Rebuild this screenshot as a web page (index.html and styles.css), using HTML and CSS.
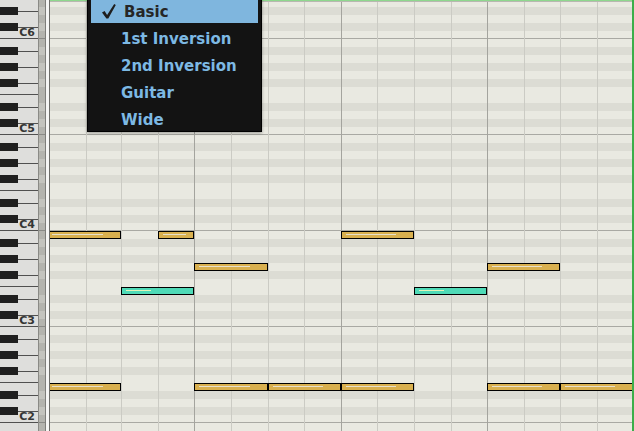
FILE: index.html
```html
<!DOCTYPE html>
<html lang="en">
<head>
  <meta charset="UTF-8" />
  <title>Piano Roll</title>
  <link rel="stylesheet" href="styles.css">
</head>
<body>

  <div class="roll">
    <div class="keys">
      <div class="octave"><span class="label">C6</span></div>
      <div class="octave"><span class="label">C5</span></div>
      <div class="octave"><span class="label">C4</span></div>
      <div class="octave"><span class="label">C3</span></div>
      <div class="octave"><span class="label">C2</span></div>
      <div class="octave"></div>
    </div>

    <div class="strip"></div>

    <div class="grid">
      <div class="beats">
        <div class="beat first" style="width: 36px"></div>
        <div class="beat" style="width: 35px"></div>
        <div class="beat" style="width: 37px"></div>
        <div class="beat" style="width: 36px"></div>
        <div class="beat bar" style="width: 37px"></div>
        <div class="beat" style="width: 37px"></div>
        <div class="beat" style="width: 36px"></div>
        <div class="beat" style="width: 37px"></div>
        <div class="beat bar" style="width: 36px"></div>
        <div class="beat" style="width: 37px"></div>
        <div class="beat" style="width: 37px"></div>
        <div class="beat" style="width: 36px"></div>
        <div class="beat bar" style="width: 37px"></div>
        <div class="beat" style="width: 36px"></div>
        <div class="beat" style="width: 37px"></div>
        <div class="beat" style="width: 36px"></div>
      </div>

      <!-- B3 -->
      <div class="note" style="left: -3px; top: 231px; width: 74px"></div>
      <div class="note" style="left: 108px; top: 231px; width: 36px"></div>
      <div class="note" style="left: 291px; top: 231px; width: 73px"></div>
      <!-- G3 -->
      <div class="note" style="left: 144px; top: 263px; width: 74px"></div>
      <div class="note" style="left: 437px; top: 263px; width: 73px"></div>
      <!-- E3 -->
      <div class="note teal" style="left: 71px; top: 287px; width: 73px"></div>
      <div class="note teal" style="left: 364px; top: 287px; width: 73px"></div>
      <!-- E2 -->
      <div class="note" style="left: -3px; top: 383px; width: 74px"></div>
      <div class="note" style="left: 144px; top: 383px; width: 74px"></div>
      <div class="note" style="left: 218px; top: 383px; width: 73px"></div>
      <div class="note" style="left: 291px; top: 383px; width: 73px"></div>
      <div class="note" style="left: 437px; top: 383px; width: 73px"></div>
      <div class="note" style="left: 510px; top: 383px; width: 73px"></div>
    </div>

    <ul class="menu">
      <li class="item checked">
        <svg class="check" width="14" height="15" viewBox="0 0 14 15">
          <path d="M0 8.6 L2.6 7 L5.1 11 L12.2 0 L13.8 0.9 L6.3 14.6 L4.4 14.6 Z" fill="#1e1e1e"/>
        </svg>
        Basic
      </li>
      <li class="item">1st Inversion</li>
      <li class="item">2nd Inversion</li>
      <li class="item">Guitar</li>
      <li class="item">Wide</li>
    </ul>
  </div>

</body>
</html>
```

FILE: styles.css
```css
body {
  margin: 0;
  background-color: #e9e9e1;
  overflow: hidden;
}

.roll {
  position: relative;
  display: flex;
  height: 431px;
  overflow: hidden;
}

/* keyboard, one block per octave, top of block = top of the B row */
.keys {
  flex: none;
  width: 38px;
  display: flex;
  flex-direction: column;
  margin-top: -57px;
}

.octave {
  flex: none;
  height: 96px;
  display: flex;
  justify-content: flex-end;
  align-items: flex-end;
  background:
    linear-gradient(to bottom, transparent 8px, #1f1f1f 8px 16px, transparent 16px 24px, #1f1f1f 24px 32px, transparent 32px 40px, #1f1f1f 40px 48px, transparent 48px 64px, #1f1f1f 64px 72px, transparent 72px 80px, #1f1f1f 80px 88px, transparent 88px) 0 0 / 18px 96px no-repeat,
    linear-gradient(to bottom, transparent 12px, #505050 12px 13px, transparent 13px 28px, #505050 28px 29px, transparent 29px 44px, #505050 44px 45px, transparent 45px 68px, #505050 68px 69px, transparent 69px 84px, #505050 84px 85px, transparent 85px) 18px 0 / 20px 96px no-repeat,
    linear-gradient(to bottom, transparent 55px, #505050 55px 56px, transparent 56px 95px, #505050 95px) 0 0 / 100% 96px no-repeat,
    #dededc;
}

.label {
  font-family: "DejaVu Sans", sans-serif;
  font-weight: bold;
  font-size: 11px;
  line-height: 12px;
  color: #353535;
  padding-right: 3px;
}

.strip {
  flex: none;
  width: 12px;
  background:
    linear-gradient(to bottom, transparent 8px, #c4c4be 8px 16px, transparent 16px 24px, #c4c4be 24px 32px, transparent 32px 40px, #c4c4be 40px 48px, transparent 48px 64px, #c4c4be 64px 72px, transparent 72px 80px, #c4c4be 80px 88px, transparent 88px 95px, #8a8a86 95px) 1px 39px / 6px 96px repeat-y,
    linear-gradient(to right, #8a8a86 0 1px, #b4b4ae 1px 7px, #7e7e7a 7px 8px, #f6f6f4 8px 11px, #6c6c68 11px 12px);
}

/* note grid */
.grid {
  flex: 1;
  position: relative;
  overflow: hidden;
  border-right: 2px solid #3cae4a;
  background:
    linear-gradient(to bottom, #e9e9e1 8px, #dcdcd4 8px 16px, #e9e9e1 16px 24px, #dcdcd4 24px 32px, #e9e9e1 32px 40px, #dcdcd4 40px 48px, #e9e9e1 48px 64px, #dcdcd4 64px 72px, #e9e9e1 72px 80px, #dcdcd4 80px 88px, #e9e9e1 88px 95px, #a9a9a3 95px) 0 39px / 100% 96px repeat-y;
}

.grid::before {
  content: "";
  position: absolute;
  left: 0;
  right: 0;
  top: 0;
  height: 1px;
  background: #8ed88e;
  border-bottom: 1px solid #b8b8b0;
  z-index: 1;
}

.beats {
  display: flex;
  height: 100%;
}

.beat {
  flex: none;
  box-sizing: border-box;
  border-left: 1px solid #cbcbc4;
}

.beat.first { border-left: none; }
.beat.bar { border-left-color: #a4a49e; }

.note {
  position: absolute;
  height: 8px;
  box-sizing: border-box;
  border: 1px solid #000;
  background-color: #d9b04f;
}

.note::after {
  content: "";
  position: absolute;
  left: 4px;
  top: 2px;
  height: 1px;
  width: calc(75% - 3px);
  background-color: #e6dfcb;
}

.note.teal { background-color: #4fdab7; }
.note.teal::after { width: 25px; background-color: #e2f3b9; }

/* chord style popup */
.menu {
  position: absolute;
  left: 87px;
  top: -4px;
  width: 175px;
  box-sizing: border-box;
  margin: 0;
  padding: 3px 3px 0;
  list-style: none;
  background-color: #131313;
  border: 1px solid #000;
  box-shadow: 0 1px 3px rgba(0, 0, 0, 0.35);
  display: flex;
  flex-direction: column;
  gap: 4px;
  z-index: 2;
}

.item {
  display: flex;
  align-items: center;
  height: 23px;
  padding-left: 30px;
  font-family: "DejaVu Sans", sans-serif;
  font-weight: bold;
  font-size: 15px;
  color: #7db9e4;
}

.item.checked {
  padding-left: 11px;
  background-color: #7fb6de;
  color: #262626;
}

.check { margin-right: 8px; }
```
